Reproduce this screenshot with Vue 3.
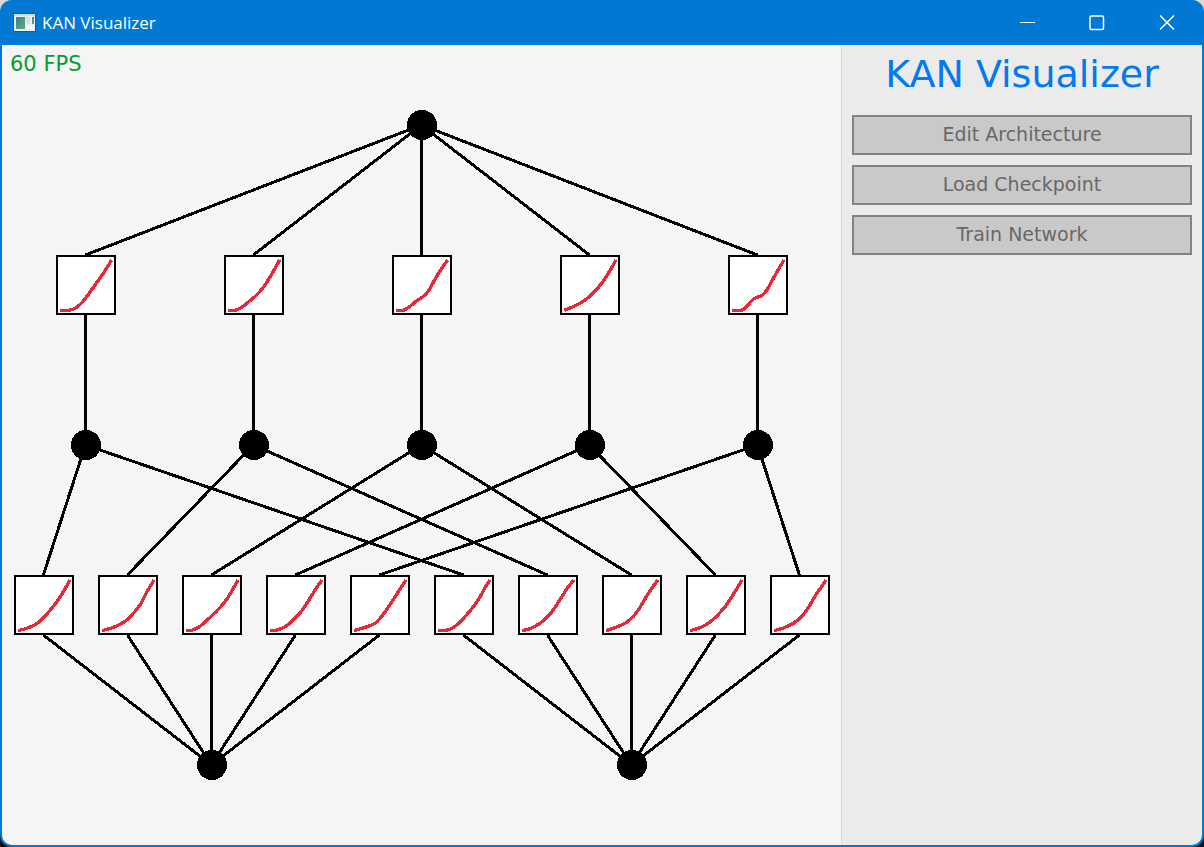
<script setup>
const plotSize = 60

const nodes = [
  { x: 420, y: 80 },
  ...[84, 252, 420, 588, 756].map((x) => ({ x, y: 400 })),
  { x: 210, y: 720 },
  { x: 630, y: 720 },
]

const upperCurves = [
  '12,166 37,166 52,162 67,153 82,138 97,118 117,90 142,55 167,15',
  '12,166 33,166 53,157 73,141 98,120 120,94 138,66 153,40 167,15',
  '12,166 34,166 54,154 72,139 94,124 109,108 124,82 144,48 167,15',
  '13,166 40,155 65,142 90,123 115,97 137,68 155,38 168,15',
  '13,166 43,165 56,154 78,131 101,122 116,106 136,70 156,35 168,15',
]

const lowerCurves = [
  '12,167 38,160 63,149 83,134 108,106 128,81 148,50 168,15',
  '12,167 41,159 68,147 91,131 116,103 131,82 146,52 168,15',
  '12,167 29,166 54,154 79,132 104,108 129,80 149,49 168,15',
  '12,167 37,164 62,152 87,130 110,104 130,73 149,42 168,15',
  '12,167 45,157 75,145 95,124 115,96 140,58 168,15',
  '12,167 45,164 68,150 93,125 116,98 138,66 153,38 168,15',
  '12,167 36,161 66,145 91,123 111,97 131,66 149,38 168,15',
  '12,167 39,158 69,145 94,124 114,97 134,63 152,36 168,15',
  '12,167 42,158 72,141 97,118 122,89 142,58 168,15',
  '12,167 40,159 70,145 95,124 115,98 135,64 168,15',
]

// Catmull-Rom spline through the sampled points, as cubic segments
function smooth(samples) {
  const pts = samples.split(' ').map((s) => s.split(',').map(Number))
  const at = (i) => pts[Math.max(0, Math.min(pts.length - 1, i))]
  let d = `M${pts[0]}`
  for (let i = 0; i < pts.length - 1; i++) {
    const [a, b, c, e] = [at(i - 1), at(i), at(i + 1), at(i + 2)]
    const c1 = b.map((v, k) => v + (c[k] - a[k]) / 6)
    const c2 = c.map((v, k) => v - (e[k] - b[k]) / 6)
    d += ` C${c1} ${c2} ${c}`
  }
  return d
}

const plots = [
  ...upperCurves.map((curve, i) => ({
    d: smooth(curve),
    x: 84 + i * 168,
    y: 240,
    from: nodes[0],
    to: nodes[1 + i],
  })),
  ...lowerCurves.map((curve, i) => ({
    d: smooth(curve),
    x: 42 + i * 84,
    y: 560,
    from: nodes[1 + (i % 5)],
    to: nodes[i < 5 ? 6 : 7],
  })),
]

const actions = ['Edit Architecture', 'Load Checkpoint', 'Train Network']
</script>

<template>
  <div class="window">
    <header class="titlebar">
      <svg class="app-icon" viewBox="0 0 23 19" aria-hidden="true">
        <defs>
          <linearGradient id="icon-fill" x1="0" y1="0" x2="1" y2="1">
            <stop offset="0" stop-color="#3a7a9c" />
            <stop offset="1" stop-color="#5fb56a" />
          </linearGradient>
        </defs>
        <rect x="0" y="0" width="23" height="19" rx="1" fill="#2a5680" />
        <rect x="1" y="1" width="21" height="17" fill="#e9eef1" />
        <rect x="1" y="1" width="21" height="2" fill="#cfdbe3" />
        <rect x="3" y="4" width="9" height="12" fill="url(#icon-fill)" />
        <rect x="13" y="4" width="4" height="7" fill="#dcdfe0" />
        <rect x="13" y="12" width="8" height="4" fill="#f8f8f8" />
        <rect x="19" y="4" width="2" height="7" fill="url(#icon-fill)" />
      </svg>
      <span class="caption">KAN Visualizer</span>
      <div class="controls">
        <button type="button" aria-label="Minimize">
          <svg viewBox="0 0 16 16"><path d="M1 7.500h15" /></svg>
        </button>
        <button type="button" aria-label="Maximize">
          <svg viewBox="0 0 16 16"><rect x="1" y="1" width="13.500" height="13.500" rx="1.500" class="thick" /></svg>
        </button>
        <button type="button" aria-label="Close">
          <svg viewBox="0 0 16 16"><path d="M1 0.500l14 14M15 0.500L1 14.500" class="thick" /></svg>
        </button>
      </div>
    </header>

    <main class="content">
      <section class="canvas">
        <svg class="graph" viewBox="0 0 840 800" role="img" aria-label="Network graph">
          <g class="edges" transform="translate(-0.6 0)">
            <template v-for="(p, i) in plots" :key="i">
              <line :x1="p.from.x" :y1="p.from.y" :x2="p.x" :y2="p.y - plotSize / 2" />
              <line :x1="p.x" :y1="p.y + plotSize / 2" :x2="p.to.x" :y2="p.to.y" />
            </template>
          </g>
          <circle v-for="(n, i) in nodes" :key="i" :cx="n.x" :cy="n.y" r="15" />
          <svg
            v-for="(p, i) in plots"
            :key="i"
            :x="p.x - plotSize / 2"
            :y="p.y - plotSize / 2"
            :width="plotSize"
            :height="plotSize"
            viewBox="0 0 180 180"
          >
            <rect class="frame" x="3" y="3" width="174" height="174" />
            <path class="curve" :d="p.d" />
          </svg>
        </svg>
        <span class="fps">60 FPS</span>
      </section>

      <aside class="sidebar">
        <h1>KAN Visualizer</h1>
        <button v-for="label in actions" :key="label" type="button" class="action">{{ label }}</button>
      </aside>
    </main>
  </div>
</template>

<style>
body {
  background: linear-gradient(#dadada 50%, #101010 50%);
}
</style>

<style scoped>
.window {
  box-sizing: border-box;
  min-height: 100vh;
  display: flex;
  flex-direction: column;
  border: 2px solid #0078d4;
  border-top: 0;
  border-radius: 12px;
  overflow: hidden;
  background: #0078d4;
  font-family: "DejaVu Sans", sans-serif;
}

.titlebar {
  height: 45px;
  display: flex;
  align-items: center;
  padding-left: 11px;
  color: #fff;
}

.app-icon {
  width: 23px;
  height: 19px;
  margin-right: 6px;
}

.caption {
  font: 17px/24px "Open Sans", sans-serif;
}

.controls {
  display: flex;
  align-self: stretch;
  margin-left: auto;
}

.controls button {
  width: 70px;
  padding: 0;
  border: 0;
  background: transparent;
  display: flex;
  align-items: center;
  justify-content: center;
}

.controls svg {
  width: 16px;
  height: 16px;
  fill: none;
  stroke: #fff;
}

.controls .thick {
  stroke-width: 1.5;
}

.content {
  flex: 1;
  display: grid;
  grid-template-columns: 7fr 3fr;
}

.canvas {
  position: relative;
  min-width: 0;
  background: #f5f5f5;
  box-shadow: inset -1px 0 #dadada;
}

.graph {
  display: block;
  width: 100%;
  shape-rendering: crispEdges;
}

.edges {
  stroke: #000;
  stroke-width: 3;
}

.frame {
  fill: #fff;
  stroke: #000;
  stroke-width: 6;
}

.curve {
  fill: none;
  stroke: #e62937;
  stroke-width: 10;
}

.fps {
  position: absolute;
  left: 8px;
  top: 7px;
  color: #009e2f;
  font-size: 21px;
  line-height: 24px;
}

.sidebar {
  min-width: 0;
  display: flex;
  flex-direction: column;
  gap: 10px;
  padding: 10px;
  background: #ebebeb;
}

h1 {
  margin: 0;
  color: #0079f1;
  font-size: 38px;
  font-weight: 400;
  line-height: 38px;
  padding-bottom: 12px;
  text-align: center;
}

.action {
  height: 40px;
  padding: 0 0 2px;
  border: 2px solid #838383;
  border-radius: 0;
  background: #c9c9c9;
  color: #686868;
  font-family: inherit;
  font-size: 19px;
  line-height: 24px;
}
</style>
